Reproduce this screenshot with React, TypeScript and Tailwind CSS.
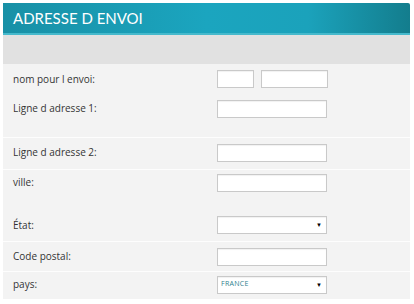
import React from "react";

const label = "w-[214px] pl-[10px] text-[10px] text-[#333]";
const input = "h-[18px] border border-[#c9c9c9] bg-white shadow-[inset_0_1px_1px_rgba(0,0,0,0.06)]";

function Select({ value }: { value?: string }) {
  return (
    <div className={`${input} flex w-[110px] items-center justify-between pl-[3px] pr-[4px]`}>
      <span className="text-[7px] tracking-[0.3px] text-[#2d7f8e]">{value}</span>
      <span className="text-[6px] leading-none text-black">▼</span>
    </div>
  );
}

function App() {
  return (
    <div
      className="h-[304px] w-[414px] bg-white pl-[3px] pt-[3px]"
      style={{ fontFamily: "'Open Sans', 'Noto Sans', sans-serif" }}
    >
      <div className="w-[407px]">
        <div className="flex h-[32px] items-center rounded-tr-[2px] border-b-2 border-[#45b9cc] bg-[linear-gradient(90deg,#1890a6_0%,#1ba5bf_50%,#1ba2bb_75%,#137d8d_100%)] pl-[10px]">
          <h1
            className="text-[15px] text-white"
            style={{ fontFamily: "Lato, 'Open Sans', sans-serif" }}
          >
            ADRESSE D ENVOI
          </h1>
        </div>
        <div className="h-[29px] bg-[#e1e1e1]" />
        <div className="h-[235px] bg-[#f3f3f3]">
          <div className="border-b border-[#fdfdfd]">
            <div className="flex h-[30px] items-center">
              <span className={label}>nom pour l envoi:</span>
              <div className={`${input} w-[37px]`} />
              <div className={`${input} ml-[7px] w-[67px]`} />
            </div>
            <div className="flex h-[29px] items-center">
              <span className={label}>Ligne d adresse 1:</span>
              <div className={`${input} w-[110px]`} />
            </div>
            <div className="h-[14px]" />
          </div>
          <div className="border-b border-[#fdfdfd] pb-[2px]">
            <div className="flex h-[29px] items-center">
              <span className={label}>Ligne d adresse 2:</span>
              <div className={`${input} w-[110px]`} />
            </div>
          </div>
          <div className="border-b border-[#fdfdfd]">
            <div className="flex h-[25px] items-center">
              <span className={label}>ville:</span>
              <div className={`${input} w-[110px]`} />
            </div>
            <div className="h-[14px]" />
            <div className="flex h-[32px] items-center">
              <span className={label}>État:</span>
              <Select />
            </div>
          </div>
          <div className="border-b border-[#fdfdfd]">
            <div className="flex h-[29px] items-center">
              <span className={label}>Code postal:</span>
              <div className={`${input} w-[110px]`} />
            </div>
          </div>
          <div className="flex h-[25px] items-center">
            <span className={label}>pays:</span>
            <Select value="FRANCE" />
          </div>
        </div>
      </div>
    </div>
  );
}

export default App;
